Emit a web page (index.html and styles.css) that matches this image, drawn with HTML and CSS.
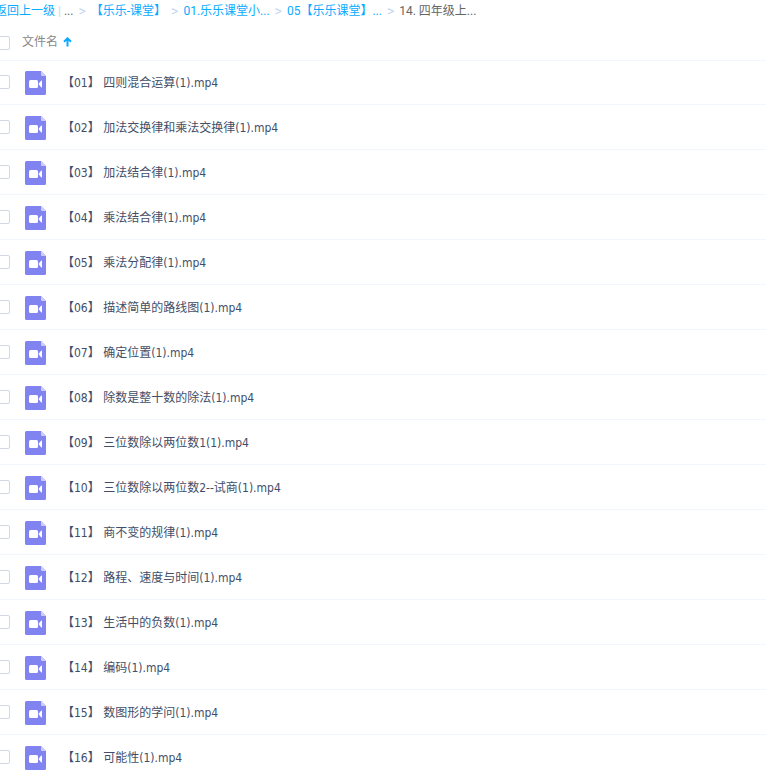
FILE: index.html
```html
<!DOCTYPE html>
<html lang="zh-CN">
<head>
    <meta charset="UTF-8">
    <meta name="viewport" content="width=device-width, initial-scale=1.0">
    <title>14. 四年级上</title>
    <link rel="stylesheet" href="styles.css">
</head>
<body>

    <div class="file-panel">
        <nav class="breadcrumb">
            <a href="#">返回上一级</a>
            <span class="divider">|</span>
            <span class="more">...</span>
            <span class="sep">&gt;</span>
            <a href="#">【乐乐-课堂】</a>
            <span class="sep">&gt;</span>
            <a href="#">01.乐乐课堂小...</a>
            <span class="sep">&gt;</span>
            <a href="#">05【乐乐课堂】...</a>
            <span class="sep">&gt;</span>
            <span class="current">14. 四年级上...</span>
        </nav>

        <table class="file-table">
            <thead>
                <tr>
                    <th class="check"><input type="checkbox" id="check-all" aria-label="全选"></th>
                    <th class="heading" colspan="2">
                        <button class="sort-button" type="button">
                            文件名
                            <svg class="arrow" width="9" height="10" viewBox="0 0 9 10" aria-hidden="true">
                                <path d="M4.5 9.5V2M1 4.8L4.5 1.3L8 4.8" fill="none" stroke="currentColor" stroke-width="2"/>
                            </svg>
                        </button>
                    </th>
                </tr>
            </thead>
            <tbody id="file-list"></tbody>
        </table>
    </div>

    <!-- 视频文件图标 -->
    <template id="video-icon">
        <svg class="video-icon" width="21" height="24" viewBox="0 0 21 24" aria-hidden="true">
            <path d="M1.5 0H16L21 5V22.5Q21 24 19.5 24H1.5Q0 24 0 22.5V1.5Q0 0 1.5 0Z" fill="#8183f1"/>
            <path d="M16 0L21 5H17Q16 5 16 4Z" fill="#cdcdfa"/>
            <rect x="4" y="9" width="9" height="8" rx="1.5" fill="#fff"/>
            <path d="M13.5 13L16 9.8Q17 9 17 10V16Q17 17 16 16.2Z" fill="#fff"/>
        </svg>
    </template>

    <script src="script.js"></script>
</body>
</html>
```

FILE: styles.css
```css
* {
    box-sizing: border-box;
}
body {
    margin: 0;
    background: #fff;
    font-family: Roboto, "Noto Sans CJK SC", sans-serif;
    font-size: 12px;
    color: #424e67;
    overflow: hidden;
}

/* 面板左侧略微超出窗口 */
.file-panel {
    margin-left: -5px;
}
.breadcrumb {
    display: flex;
    align-items: center;
    gap: 5px;
    height: 24px;
    padding-bottom: 2px;
    line-height: 20px;
    white-space: nowrap;
    color: #666;
}
.breadcrumb a {
    color: #09aaff;
    text-decoration: none;
}
.sep {
    font-size: 14px;
    color: #c4d8f0;
}
.divider {
    margin: 0 -2px;
    color: #c4d8f0;
}

.file-table {
    width: 100%;
    border-collapse: separate;
    border-spacing: 0;
}
th,
td {
    padding: 0;
    text-align: left;
    font-weight: normal;
}
th {
    height: 36px;
}
td {
    height: 45px;
    border-bottom: 1px solid #f2f6fd;
}
tbody tr:first-child td {
    box-shadow: inset 0 1px #f2f6fd;
}
.check {
    width: 30px;
}
.icon {
    width: 37px;
    padding-top: 2px;
}
input[type="checkbox"] {
    appearance: none;
    display: block;
    width: 14px;
    height: 14px;
    margin: 0 0 0 1px;
    border: 1px solid #d2d8e4;
    border-radius: 2px;
    background: #fff;
}
input[type="checkbox"]:checked {
    background: #09aaff;
}
th input[type="checkbox"] {
    margin-top: 2px;
}

.sort-button {
    display: flex;
    align-items: center;
    gap: 5px;
    margin-left: -3px;
    padding: 0;
    border: none;
    background: none;
    font: inherit;
    line-height: 18px;
    color: #888;
    cursor: pointer;
}
.arrow {
    color: #09aaff;
}
.video-icon {
    display: block;
}
.name {
    padding-top: 2px;
    font-family: "DejaVu Sans Condensed", "Noto Sans", "Noto Sans CJK SC", sans-serif;
    line-height: 18px;
    white-space: nowrap;
}
```

FILE: script.js
```js
const files = [
    "【01】 四则混合运算(1).mp4",
    "【02】 加法交换律和乘法交换律(1).mp4",
    "【03】 加法结合律(1).mp4",
    "【04】 乘法结合律(1).mp4",
    "【05】 乘法分配律(1).mp4",
    "【06】 描述简单的路线图(1).mp4",
    "【07】 确定位置(1).mp4",
    "【08】 除数是整十数的除法(1).mp4",
    "【09】 三位数除以两位数1(1).mp4",
    "【10】 三位数除以两位数2--试商(1).mp4",
    "【11】 商不变的规律(1).mp4",
    "【12】 路程、速度与时间(1).mp4",
    "【13】 生活中的负数(1).mp4",
    "【14】 编码(1).mp4",
    "【15】 数图形的学问(1).mp4",
    "【16】 可能性(1).mp4"
];

const list = document.getElementById("file-list");
const icon = document.getElementById("video-icon").innerHTML;

list.innerHTML = files.map((name, i) => `
    <tr>
        <td class="check"><input type="checkbox" id="file-${i}"></td>
        <td class="icon">${icon}</td>
        <td class="name"><label for="file-${i}">${name}</label></td>
    </tr>`).join("");

// 全选
document.getElementById("check-all").addEventListener("change", function() {
    list.querySelectorAll("input").forEach(box => box.checked = this.checked);
});
```
